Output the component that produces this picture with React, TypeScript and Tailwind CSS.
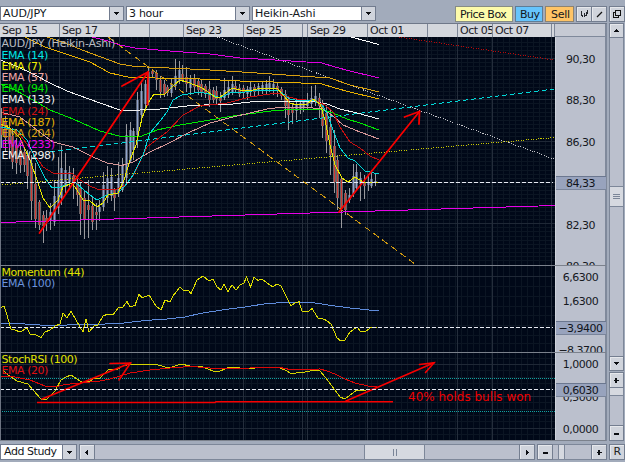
import type { ReactNode } from 'react'

type Point = [number, number]

interface Line {
  color: string
  points: string
}

interface Tick {
  y: number
  label: string
}

const dates = [
  { width: 60, label: 'Sep 15' },
  { width: 60, label: 'Sep 17' },
  { width: 30, label: '' },
  { width: 34, label: '' },
  { width: 60, label: 'Sep 23' },
  { width: 59, label: 'Sep 25' },
  { width: 5, label: '' },
  { width: 60, label: 'Sep 29' },
  { width: 60, label: 'Oct 01' },
  { width: 30, label: '' },
  { width: 35, label: 'Oct 05' },
  { width: 59, label: 'Oct 07' },
  { width: 3, label: 'O' },
]

const days = [59.5, 119.5, 149.5, 183.5, 243.5, 302.5, 307.5, 367.5, 427.5, 457.5, 492.5, 551.5]

const legend = [
  { color: '#00e5e5', label: 'EMA (14)' },
  { color: '#f0f000', label: 'EMA (7)' },
  { color: '#f0a8a8', label: 'EMA (57)' },
  { color: '#00e800', label: 'EMA (94)' },
  { color: '#f0f0f0', label: 'EMA (133)' },
  { color: '#d01010', label: 'EMA (24)' },
  { color: '#e8b400', label: 'EMA (187)' },
  { color: '#d8a010', label: 'EMA (204)' },
  { color: '#f000f0', label: 'EMA (233)' },
  { color: '#f0f0f0', label: 'EMA (298)' },
]

// high, low, body top, body bottom, falling
const candles: [number, number, number, number, number][] = [
  [108, 148, 118, 135, 1], [116, 152, 122, 138, 1], [122, 158, 128, 144, 1], [128, 169, 136, 162, 1],
  [138, 174, 145, 163, 1], [143, 173, 150, 165, 1], [148, 172, 152, 165, 1], [150, 189, 155, 176, 1],
  [155, 220, 163, 201, 1], [163, 228, 184, 219, 1], [200, 230, 202, 225, 1], [211, 243, 215, 226, 1],
  [210, 231, 218, 222, 1], [203, 230, 212, 221, 0], [180, 226, 196, 222, 0], [157, 214, 180, 208, 0],
  [146, 205, 168, 198, 0], [153, 193, 170, 187, 0], [166, 187, 172, 182, 0], [168, 199, 176, 184, 1],
  [175, 206, 183, 195, 1], [182, 235, 188, 214, 1], [190, 239, 198, 220, 1], [180, 238, 205, 210, 1],
  [197, 230, 206, 222, 1], [203, 230, 212, 215, 1], [200, 221, 207, 212, 0], [172, 211, 185, 207, 0],
  [166, 203, 178, 198, 0], [168, 201, 177, 196, 0], [188, 211, 190, 198, 1], [162, 197, 178, 193, 0],
  [158, 192, 165, 190, 0], [124, 182, 135, 178, 0], [122, 163, 130, 161, 0], [128, 160, 131, 150, 0],
  [92, 148, 100, 135, 0], [82, 120, 91, 115, 0], [80, 110, 84, 104, 0], [68, 105, 72, 100, 0],
  [69, 78, 71, 74, 1], [70, 90, 73, 80, 1], [76, 98, 80, 92, 1], [80, 97, 84, 94, 1],
  [85, 96, 87, 93, 1], [78, 97, 84, 93, 0], [59, 90, 76, 86, 0], [61, 84, 70, 81, 0],
  [65, 82, 74, 80, 1], [67, 92, 77, 84, 1], [75, 95, 78, 88, 0], [74, 92, 79, 87, 1],
  [78, 95, 81, 90, 1], [79, 97, 84, 92, 1], [84, 98, 86, 93, 1], [81, 107, 89, 100, 1],
  [87, 103, 90, 100, 1], [86, 105, 91, 99, 1], [92, 112, 97, 101, 1], [78, 100, 90, 98, 0],
  [80, 98, 87, 95, 0], [76, 95, 84, 92, 0], [80, 93, 86, 90, 1], [84, 97, 88, 94, 1],
  [85, 98, 88, 93, 1], [86, 100, 89, 94, 0], [82, 97, 87, 92, 0], [84, 96, 87, 92, 1],
  [83, 96, 86, 91, 0], [81, 94, 85, 90, 0], [80, 95, 84, 90, 0], [76, 92, 83, 89, 0],
  [79, 95, 84, 88, 0], [82, 97, 86, 91, 1], [87, 100, 89, 96, 1], [90, 118, 94, 106, 1],
  [96, 130, 99, 115, 1], [103, 124, 107, 113, 1], [98, 120, 104, 111, 0], [100, 114, 103, 110, 0],
  [99, 112, 102, 108, 0], [93, 110, 100, 106, 0], [86, 108, 98, 104, 0], [85, 106, 96, 102, 0],
  [93, 118, 98, 106, 1], [100, 138, 105, 126, 1], [105, 153, 113, 141, 1], [110, 175, 127, 155, 1],
  [130, 193, 146, 182, 1], [155, 210, 160, 198, 1], [178, 228, 179, 208, 1], [190, 215, 193, 210, 1],
  [188, 203, 195, 200, 0], [164, 197, 176, 194, 0], [164, 190, 172, 188, 0], [172, 201, 178, 184, 0],
  [175, 199, 182, 186, 1], [174, 191, 182, 185, 0], [170, 188, 179, 186, 0], [174, 186, 181, 183, 0],
]

const averages: Line[] = [
  { color: '#e000e0', points: '92,37 108,41 120,45 135,48 170,51 210,54 240,58 275,60 322,63 335,67 350,71 379,78' },
  { color: '#d8a010', points: '47,37 62,42 90,53 120,64 135,66.5 180,68.5 210,70 250,72.5 300,76 330,78 350,85 379,92' },
  { color: '#e8b000', points: '25,37 45,47 60,52 90,62 110,73 130,77.5 180,78.5 200,79 240,81 290,82.5 322,84 335,88 350,92 379,99' },
  { color: '#ffffff', points: '351,37 379,44.5' },
  { color: '#f0f0f0', points: '0,60 16,66 33,74 50,83 67,91 100,103 120,110 140,110 160,109 187,106 210,104.7 233,104 250,102 267,101 300,102 313,101.5 327,104 340,109 357,113 379,119' },
  { color: '#00e800', points: '0,84 15,90 33,100 50,110 73,119 100,131 123,137 140,136.7 157,130 180,125 210,120 233,116 273,110.7 300,109 320,109 333,113 347,119 360,123 379,130' },
  { color: '#d89898', points: '0,112 20,117 37,130 53,142 73,147 93,157 107,163 122,165.5 133,162 150,152 167,144 190,132 210,123 233,117 267,109 283,107 313,108 323,109 333,116 343,125 360,132 379,139' },
  { color: '#c81010', points: '0,123 20,135 30,148 43,167 53,173 73,174 80,180 90,186 97,189 117,189 127,184 133,176 147,147 167,132 183,115 200,106 227,103 250,97 277,93 285,96 297,99 315,101 325,105 333,112 340,127 350,142 360,148 370,156 379,160' },
  { color: '#00d8d8', points: '0,127 17,130 27,140 37,162 45,178 52,188 60,187 75,182 85,191 97,200 107,195 118,193 125,186 133,175 143,155 150,133 160,121 167,112 173,100 182,95 200,92 213,95 220,98 230,93 245,92 260,90 278,90 290,99 300,101 313,100 322,105 327,113 333,130 340,148 348,158 355,161 365,171 379,174' },
  { color: '#e8e800', points: '0,124 10,128 20,138 30,160 37,180 43,198 50,208 58,200 63,187 72,183 77,190 83,200 90,201 97,207 103,203 108,195 118,193 124,180 130,160 136,145 142,118 148,103 154,94 165,94 173,86 180,80 187,82 195,85 200,87 207,91 215,97 219,98 227,92 232,88 240,90 250,91 260,88 277,88 283,95 290,103 297,105 307,104 313,99 320,104 325,120 330,145 335,165 342,178 348,182 355,177 363,182 370,183 379,182' },
]

const momentum: Line[] = [
  { color: '#5f8cdc', points: '0,324 10,323 40,325 67,325 80,324 105,324 120,323.5 145,320.5 167,319 185,317 200,313.5 225,309.5 245,307 267,303.5 285,302.5 315,303 335,306 350,308 379,311' },
  { color: '#dede00', points: '0,308 4,306 7,315 11,329 15,330 20,332 27,328 30,334 35,334.5 41,337.5 45,332 50,330 55,326 60,324 63,313 67,318 71,311 76,320 80,327 83,332 86,319 89,332 94,326 98,325 103,316 108,314 113,315 119,307 123,307 127,301.5 130,307 135,305.5 139,294 142,298 149,295 156,306 161,310 165,300 170,302 173,296 180,287 184,291 188,290 191,293.5 197,280 203,276 209,281 213,279 217,287 221,290 224,284 228,291.5 232,285 236,290 240,285 244,283 246.5,277 250.5,287 254,277 258,280.5 262,279 267,283 273,287 277,284 281,286 285,294 291,306 295,303 299,301.5 302,311 308,312 312,308.5 318,318 325,319.5 331,324 337,338 341,341 345,340 350,332 357,327 361,332 366,331 371,327.5 377,328' },
]

const stochRsi: Line[] = [
  { color: '#d4d400', points: '3,370 8,375 17,381 28,384 33,390 41,399 47,399 55,391 61,380 66,377 71,375 77,379 83,383 90,381 95,378 100,378 108,370 118,369 123,366 130,364 155,364 165,367 172,367 181,364 190,366 203,367 213,371 220,371 230,367 240,368 245,369 265,367 277,367 285,370 292,374 300,372 305,372 315,370 320,371 325,377 332,386 340,397 345,399 350,395 357,390 366,391' },
  { color: '#dc0808', points: '0,376 15,377 30,380 45,386 55,387 65,384.5 80,383 100,381 110,379 120,376 130,373 150,370 170,368 190,366.5 205,367.5 215,368.5 250,368 280,367.5 290,369.5 320,369 327,371 335,374 345,379 355,383 370,386.5 377,387' },
]

function range(from: number, to: number, step: number) {
  const values: number[] = []
  for (let v = from; v < to; v += step) values.push(Math.floor(v) + 0.5)
  return values
}

interface PanelProps {
  top: number
  height: number
  minor: number[]
  major: number[]
  ticks: Tick[]
  current: Tick
  children: ReactNode
}

function Panel({ top, height, minor, major, ticks, current, children }: PanelProps) {
  return (
    <svg
      width="607"
      height={height}
      viewBox={`0 ${top} 607 ${height}`}
      className="block shrink-0 text-[11px] tracking-[-0.5px]"
    >
      <rect x="0" y={top} width="555" height={height} fill="#000818" />
      <g shapeRendering="crispEdges" strokeWidth="1">
        {range(5, 555, 6).map((x) => (
          <line key={x} x1={x} x2={x} y1={top} y2={top + height} stroke="#0b1523" />
        ))}
        {minor.map((y) => (
          <line key={y} x1="0" x2="555" y1={y} y2={y} stroke="#0b1523" />
        ))}
        {major.map((y) => (
          <line key={y} x1="0" x2="555" y1={y} y2={y} stroke="#1f2836" />
        ))}
        {days.map((x) => (
          <line key={x} x1={x} x2={x} y1={top} y2={top + height} stroke="#242d3b" />
        ))}
      </g>
      {children}
      <g shapeRendering="crispEdges">
        <line x1="0" x2="553" y1={current.y} y2={current.y} stroke="#e6e9f2" strokeDasharray="4 2" />
        <rect x="0" y={top} width="1" height={height} fill="#6d7482" />
        <rect x="555" y={top} width="51" height={height} fill="#bbc0cd" />
        <rect x="555" y={top} width="1" height={height} fill="#d0d4dc" />
        <rect x="605" y={top} width="2" height={height} fill="#7f899b" />
      </g>
      {ticks.map((tick) => (
        <text key={tick.label} x="580.5" y={tick.y + 4} textAnchor="middle" fill="#15181e">
          {tick.label}
        </text>
      ))}
      <g shapeRendering="crispEdges">
        <rect x="556" y={current.y - 7} width="50" height="14" fill="#98a3bd" />
        <rect x="556" y={current.y - 7} width="50" height="1" fill="#6b778f" />
        <rect x="556" y={current.y + 6} width="50" height="1" fill="#7a859b" />
        <rect x="0" y={top + height - 1} width="606" height="1" fill="#7b818c" />
      </g>
      <text x="580.5" y={current.y + 4} textAnchor="middle" fill="#10131a">
        {current.label}
      </text>
    </svg>
  )
}

function Lines({ lines }: { lines: Line[] }) {
  return (
    <g fill="none" strokeWidth="1" shapeRendering="crispEdges">
      {lines.map((line) => (
        <polyline key={line.points} points={line.points} stroke={line.color} />
      ))}
    </g>
  )
}

function Arrow({ from, to, left, right, width = 2 }: { from: Point; to: Point; left: Point; right: Point; width?: number }) {
  return (
    <g stroke="#f80000" strokeWidth={width} fill="none" strokeLinecap="round">
      <path d={`M${from} L${to}`} />
      <path d={`M${left} L${to} L${right}`} />
    </g>
  )
}

function Glyph({ d }: { d: string }) {
  return (
    <svg width="9" height="9" viewBox="0 0 9 9" className="block">
      <path d={d} fill="#0c0e12" shapeRendering="crispEdges" />
    </svg>
  )
}

const DOWN = 'M2 3h5v1h-1v1h-1v1h-1v-1h-1v-1h-1z'
const UP = 'M4 3h1v1h1v1h1v1h-5v-1h1v-1h1z'
const LEFT = 'M5 2v5h-1v-1h-1v-1h-1v-1h1v-1h1v-1z'
const RIGHT = 'M3 2v5h1v-1h1v-1h1v-1h-1v-1h-1v-1z'
const PLUS = 'M3 2h2v2h2v1h-2v2h-2v-2h-1v-1h1z'
const MINUS = 'M2 4h5v2h-5z'

function Key({ className = '', children }: { className?: string; children: ReactNode }) {
  return (
    <div
      className={`flex h-[15px] w-[15px] shrink-0 items-center justify-center border border-[#747e90] bg-[#d0d4dc] shadow-[inset_1px_1px_0_#e6e8ec] ${className}`}
    >
      {children}
    </div>
  )
}

function Select({ label, className }: { label: string; className: string }) {
  return (
    <div className={`flex h-[15px] shrink-0 border border-[#717b8e] bg-white ${className}`}>
      <div className="flex-1 pl-[2px] leading-[14px] whitespace-nowrap">{label}</div>
      <div className="flex w-[14px] items-center justify-center border-l border-[#717b8e] bg-[#d0d4dc]">
        <Glyph d={DOWN} />
      </div>
    </div>
  )
}

function Toolbar() {
  return (
    <div className="flex h-[23px] shrink-0 pt-[6px]">
      <Select label="AUD/JPY" className="w-[124px] tracking-[-0.1px]" />
      <Select label="3 hour" className="ml-[2px] w-[124px] tracking-[-0.3px]" />
      <Select label="Heikin-Ashi" className="ml-[2px] w-[124px] tracking-[-0.1px]" />
      <div className="ml-[79px] h-[16px] w-[58px] border border-[#878d84] bg-[#fdfbaa] pl-[4px] leading-[15px] whitespace-nowrap">Price Box</div>
      <div className="ml-[2px] h-[16px] w-[28px] border border-[#5f7c95] bg-[#66c4fc] pl-[4px] leading-[15px]">Buy</div>
      <div className="ml-[2px] h-[16px] w-[29px] border border-[#8d8371] bg-[#ffc466] pl-[5px] leading-[15px] tracking-[-0.3px]">Sell</div>
      <Key className="ml-[2px] h-[16px] w-[16px]">
        <svg width="9" height="9" viewBox="0 0 9 9" shapeRendering="crispEdges">
          <path d="M1 1h1v4h1v2h-1v-1h-1zM4 3h1v4h-1zM5 5h1v1h-1zM6 2h1v4h-1zM7 0h1v4h-1z" fill="#22262e" />
        </svg>
      </Key>
      <Key className="-ml-px h-[16px] w-[16px]">
        <svg width="9" height="9" viewBox="0 0 9 9">
          <path d="M2 7L7 2" stroke="#111" strokeWidth="1.2" />
        </svg>
      </Key>
      <Key className="ml-[2px] h-[16px] w-[16px]">
        <svg width="10" height="10" viewBox="0 0 10 10" fill="none" stroke="#111" shapeRendering="crispEdges">
          <path d="M3.5 1.5h5v5h-5zM3.5 3.5h-2v5h5v-2" />
        </svg>
      </Key>
    </div>
  )
}

function DateHeader() {
  return (
    <div className="flex h-[14px] w-[607px] shrink-0 border-t border-[#6f7889] tracking-[-0.45px]">
      <div className="flex w-[555px] overflow-hidden bg-[#d4d7dd]">
        {dates.map((date, i) => (
          <div
            key={i}
            style={{ width: date.width }}
            className="shrink-0 overflow-hidden border-r border-[#7e8798] pl-[2px] leading-[14px] whitespace-nowrap text-[#1c2027]"
          >
            {date.label}
          </div>
        ))}
      </div>
      <div className="flex-1 border-r-2 border-b border-[#7f899b] bg-[#c6cad4]" />
    </div>
  )
}

function Price() {
  return (
    <Panel
      top={37}
      height={229}
      minor={range(42, 265, 4.13)}
      major={[58.5, 99.5, 141.5, 182.5, 223.5]}
      ticks={[
        { y: 59, label: '90,30' },
        { y: 100, label: '88,30' },
        { y: 141.5, label: '86,30' },
        { y: 224.5, label: '82,30' },
        { y: 265.5, label: '80,30' },
      ]}
      current={{ y: 182.5, label: '84,33' }}
    >
      <g shapeRendering="crispEdges">
        {candles.map(([high, low, top, bottom, falling], i) => {
          const x = Math.round(1 + i * 3.78)
          return (
            <g key={i}>
              <rect x={x} y={high} width="1" height={low - high} fill="#9a9a9e" />
              <rect x={x - 1} y={top} width="3" height={bottom - top} fill={falling ? '#686468' : '#586072'} />
              <rect x={x} y={top} width="1" height={bottom - top} fill={falling ? '#d03a34' : '#8fa3cc'} />
            </g>
          )
        })}
      </g>
      <g strokeWidth="1" shapeRendering="crispEdges">
        <line x1="217" y1="37" x2="554" y2="159" stroke="#c4c4c8" strokeDasharray="1 1.5" />
        <line x1="399" y1="37" x2="554" y2="60" stroke="#b80808" strokeDasharray="1 1.5" />
        <line x1="0" y1="185" x2="555" y2="137.5" stroke="#c8c800" strokeDasharray="1 1.5" />
        <line x1="108" y1="37" x2="415" y2="264" stroke="#d09a10" strokeDasharray="7 4" />
        <line x1="50" y1="152" x2="554" y2="89" stroke="#00d8d8" strokeDasharray="5 3" />
        <line x1="0" y1="222.5" x2="555" y2="205.5" stroke="#e800e8" />
      </g>
      <Lines lines={averages} />
      <Arrow from={[39.5, 233]} to={[148, 72]} left={[122, 86]} right={[147.5, 105]} width={1.8} />
      <Arrow from={[339, 212]} to={[419.5, 111.5]} left={[404.5, 117]} right={[419, 124]} width={1.8} />
      <text x="1.5" y="47" fill="#b9bcc2" className="tracking-[-0.2px]">
        AUD/JPY (Heikin-Ashi)
      </text>
      {legend.map((item, i) => (
        <text key={item.label} x="1.5" y={58.5 + i * 11.2} fill={item.color} className="tracking-[-0.45px]">
          {item.label}
        </text>
      ))}
    </Panel>
  )
}

function Momentum() {
  return (
    <Panel
      top={266}
      height={87}
      minor={[286.5, 296.5, 306.5, 315.5, 325.5, 335.5, 343.5]}
      major={[276.5]}
      ticks={[
        { y: 277, label: '6,6300' },
        { y: 301, label: '1,6300' },
        { y: 349.5, label: '−8,3700' },
      ]}
      current={{ y: 327.5, label: '−3,9400' }}
    >
      <Lines lines={momentum} />
      <text x="1.5" y="276" fill="#e2e200" className="tracking-[-0.48px]">Momentum (44)</text>
      <text x="1.5" y="287" fill="#6a92dc" className="tracking-[-0.4px]">EMA (100)</text>
    </Panel>
  )
}

function StochRsi() {
  return (
    <Panel
      top={353}
      height={88}
      minor={range(358, 440, 6.4)}
      major={[364.5, 396.5, 428.5]}
      ticks={[
        { y: 364, label: '1,0000' },
        { y: 396.5, label: '0,5000' },
        { y: 428.5, label: '0,0000' },
      ]}
      current={{ y: 389.5, label: '0,6030' }}
    >
      <g stroke="#10a0a0" strokeDasharray="1 1" shapeRendering="crispEdges">
        <line x1="2" x2="555" y1="378.5" y2="378.5" />
        <line x1="2" x2="555" y1="411.5" y2="411.5" />
      </g>
      <Lines lines={stochRsi} />
      <path d="M37 402.5H215L216 401.7H393" stroke="#f80000" strokeWidth="1.6" fill="none" />
      <Arrow from={[42, 399]} to={[130.5, 363]} left={[110, 363.5]} right={[119, 380]} width={1.6} />
      <Arrow from={[346, 401]} to={[434, 362.7]} left={[419.5, 364.5]} right={[425.5, 372.5]} width={1.6} />
      <text x="1.5" y="363" fill="#e2e200" className="tracking-[-0.45px]">StochRSI (100)</text>
      <text x="1.5" y="374" fill="#e01010" className="tracking-[-0.45px]">EMA (20)</text>
      <text x="408" y="401" fill="#f00000" className="text-[12px] tracking-normal">
        40% holds bulls won
      </text>
    </Panel>
  )
}

function SideScroll() {
  return (
    <div className="ml-[2px] flex w-[15px] shrink-0 flex-col">
      <Key>
        <Glyph d={UP} />
      </Key>
      <div className="flex h-[318px] flex-col border-x border-[#7d8799] bg-[#bbc0cd] pt-[148px]">
        <div className="-mx-px flex h-[21px] flex-col items-center justify-center gap-px border border-[#7d8799] bg-[#d6d9e0]">
          <div className="h-px w-[7px] bg-[#7a8597]" />
          <div className="h-px w-[7px] bg-[#7a8597]" />
          <div className="h-px w-[7px] bg-[#7a8597]" />
        </div>
      </div>
      <Key>
        <Glyph d={DOWN} />
      </Key>
      <Key className="mt-[1px] h-[16px]">
        <Glyph d={PLUS} />
      </Key>
      <div className="h-[37px] border-x border-[#7d8799] bg-[#bbc0cd]">
        <div className="h-[8px] border-b border-[#7d8799] bg-[#d6d9e0]" />
      </div>
      <Key className="h-[16px]">
        <Glyph d={MINUS} />
      </Key>
    </div>
  )
}

function BottomBar() {
  return (
    <div className="flex shrink-0 pt-[3px]">
      <Select label="Add Study" className="h-[16px] w-[77px] pl-px tracking-[-0.45px]" />
      <Key className="ml-[2px] h-[16px] w-[16px]">
        <Glyph d={LEFT} />
      </Key>
      <div className="flex h-[16px] w-[426px] border-y border-[#7d8799] bg-[#bbc0cd] pl-[269px]">
        <div className="flex w-[61px] items-center justify-center gap-[2px] border-x border-[#7d8799] bg-[#d6d9e0]">
          <div className="h-[7px] w-px bg-[#7a8597]" />
          <div className="h-[7px] w-px bg-[#7a8597]" />
        </div>
      </div>
      <Key className="-ml-px h-[16px] w-[16px]">
        <Glyph d={RIGHT} />
      </Key>
      <Key className="ml-[2px] h-[16px] w-[16px]">
        <Glyph d={MINUS} />
      </Key>
      <div className="flex h-[16px] w-[38px] border-y border-[#7d8799] bg-[#bbc0cd] pl-[5px]">
        <div className="w-[7px] border-x border-[#7d8799] bg-[#d6d9e0]" />
      </div>
      <Key className="h-[16px] w-[16px]">
        <Glyph d={PLUS} />
      </Key>
      <Key className="ml-[2px] h-[16px] w-[16px] text-[#222]">R</Key>
    </div>
  )
}

export default function App() {
  return (
    <div className="flex h-[462px] w-[625px] flex-col overflow-hidden bg-[#a2abbb] font-['DejaVu_Sans',sans-serif] text-[11px] tracking-[-0.5px] text-[#14171c]">
      <Toolbar />
      <div className="flex shrink-0">
        <div className="flex w-[607px] shrink-0 flex-col">
          <DateHeader />
          <Price />
          <Momentum />
          <StochRsi />
        </div>
        <SideScroll />
      </div>
      <BottomBar />
    </div>
  )
}
